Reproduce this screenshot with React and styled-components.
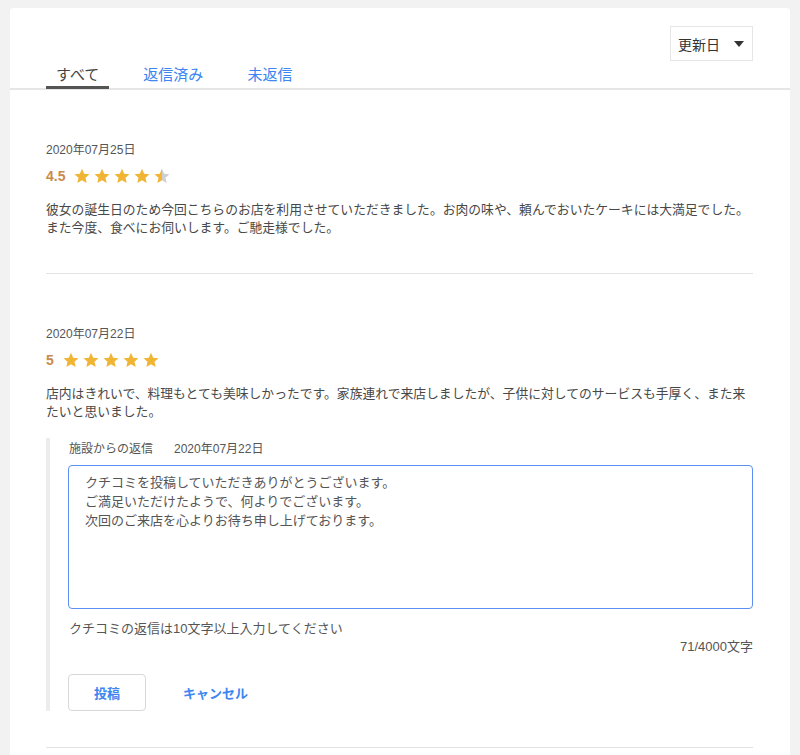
import React from 'react';
import styled, { createGlobalStyle } from 'styled-components';

const GlobalStyle = createGlobalStyle`
  html, body {
    margin: 0;
    padding: 0;
    background: #f2f2f2;
  }
  body {
    font-family: "Liberation Sans", "Noto Sans CJK JP", sans-serif;
    color: #444;
  }
`;

const Page = styled.div`
  padding: 8px 10px 0 10px;
  min-height: 747px;
`;

const Card = styled.div`
  background: #fff;
  border-radius: 3px 3px 0 0;
  min-height: 747px;
`;

const Header = styled.div`
  padding-top: 18px;
  border-bottom: 2px solid #e6e6e6;
`;

const SortRow = styled.div`
  display: flex;
  justify-content: flex-end;
  padding-right: 37px;
`;

const SortSelect = styled.div`
  width: 83px;
  height: 35px;
  box-sizing: border-box;
  border: 1px solid #e6e6e6;
  display: flex;
  align-items: center;
  justify-content: space-between;
  padding: 0 8px 0 7px;
  font-size: 14px;
  color: #333;
`;

const Caret = styled.span`
  width: 0;
  height: 0;
  border-left: 5px solid transparent;
  border-right: 5px solid transparent;
  border-top: 6px solid #333;
`;

const TabList = styled.div`
  display: flex;
  gap: 24px;
  padding-left: 36px;
  margin-top: 4px;
`;

const Tab = styled.div`
  padding: 0 10px 1px 10px;
  font-size: 15px;
  line-height: 20px;
  color: ${p => (p.$active ? '#444' : '#3d85f0')};
  border-bottom: 3px solid ${p => (p.$active ? '#555' : 'transparent')};
  margin-bottom: -1px;
`;

const List = styled.div`
  padding: 0 37px 0 36px;
`;

const Review = styled.div`
  padding: 51px 0 36px;
  border-bottom: 1px solid #e3e3e3;
`;

const DateText = styled.div`
  font-size: 12px;
  line-height: 18px;
  color: #555;
`;

const RatingRow = styled.div`
  display: flex;
  align-items: center;
  margin-top: 8px;
  height: 18px;
`;

const Score = styled.span`
  font-size: 14px;
  font-weight: 700;
  color: #c98a4b;
  margin-right: 9px;
`;

const Stars = styled.div`
  display: flex;
  gap: 4px;
`;

const Body = styled.p`
  margin: 16px 0 0;
  font-size: 12.8px;
  line-height: 18px;
  color: #484848;
`;

const ReplyBlock = styled.div`
  margin-top: 17px;
  border-left: 4px solid #ececec;
  padding: 0 0 0 18px;
`;

const ReplyHead = styled.div`
  display: flex;
  gap: 21px;
  font-size: 12px;
  line-height: 22px;
  color: #555;
  padding-left: 1px;
`;

const ReplyInput = styled.textarea`
  display: block;
  width: 100%;
  height: 144px;
  box-sizing: border-box;
  margin-top: 5px;
  border: 1px solid #5b8ff2;
  border-radius: 4px;
  padding: 7px 16px;
  font-family: "Liberation Sans", "Noto Sans CJK JP", sans-serif;
  font-size: 13px;
  line-height: 19px;
  color: #555;
  resize: none;
  outline: none;
`;

const Hint = styled.div`
  margin-top: 11px;
  font-size: 13px;
  line-height: 18px;
  color: #555;
  padding-left: 1px;
`;

const Counter = styled.div`
  text-align: right;
  font-size: 13px;
  line-height: 18px;
  color: #555;
`;

const Actions = styled.div`
  display: flex;
  align-items: center;
  gap: 37px;
  margin-top: 18px;
`;

const SubmitButton = styled.button`
  width: 78px;
  height: 37px;
  border: 1px solid #d8d8d8;
  border-radius: 4px;
  background: #fff;
  color: #3d85f0;
  font-family: inherit;
  font-size: 13px;
  font-weight: 700;
`;

const CancelButton = styled.button`
  border: none;
  background: none;
  padding: 0;
  color: #3d85f0;
  font-family: inherit;
  font-size: 13px;
  font-weight: 700;
`;

const STAR_PATH = 'M8 0.8l2.2 4.9 5.3 0.5-4 3.6 1.2 5.2L8 12.3 3.3 15l1.2-5.2-4-3.6 5.3-0.5z';

function Star({ fill, id }) {
  return (
    <svg width="16" height="16" viewBox="0 0 16 16">
      <defs>
        <linearGradient id={id}>
          <stop offset={fill} stopColor="#f1b535" />
          <stop offset={fill} stopColor="#cfcfcf" />
        </linearGradient>
      </defs>
      <path d={STAR_PATH} fill={`url(#${id})`} />
    </svg>
  );
}

function Rating({ score, uid }) {
  return (
    <RatingRow>
      <Score>{score}</Score>
      <Stars>
        {[0, 1, 2, 3, 4].map(i => {
          const f = Math.max(0, Math.min(1, score - i));
          return <Star key={i} fill={f} id={`${uid}-${i}`} />;
        })}
      </Stars>
    </RatingRow>
  );
}

export default function App() {
  return (
    <Page>
      <GlobalStyle />
      <Card>
        <Header>
          <SortRow>
            <SortSelect>
              <span>更新日</span>
              <Caret />
            </SortSelect>
          </SortRow>
          <TabList>
            <Tab $active>すべて</Tab>
            <Tab>返信済み</Tab>
            <Tab>未返信</Tab>
          </TabList>
        </Header>
        <List>
          <Review>
            <DateText>2020年07月25日</DateText>
            <Rating score={4.5} uid="r1" />
            <Body>
              彼女の誕生日のため今回こちらのお店を利用させていただきました。お肉の味や、頼んでおいたケーキには大満足でした。また今度、食べにお伺いします。ご馳走様でした。
            </Body>
          </Review>
          <Review>
            <DateText>2020年07月22日</DateText>
            <Rating score={5} uid="r2" />
            <Body>
              店内はきれいで、料理もとても美味しかったです。家族連れで来店しましたが、子供に対してのサービスも手厚く、また来たいと思いました。
            </Body>
            <ReplyBlock>
              <ReplyHead>
                <span>施設からの返信</span>
                <span>2020年07月22日</span>
              </ReplyHead>
              <ReplyInput
                readOnly
                value={'クチコミを投稿していただきありがとうございます。\nご満足いただけたようで、何よりでございます。\n次回のご来店を心よりお待ち申し上げております。'}
              />
              <Hint>クチコミの返信は10文字以上入力してください</Hint>
              <Counter>71/4000文字</Counter>
              <Actions>
                <SubmitButton>投稿</SubmitButton>
                <CancelButton>キャンセル</CancelButton>
              </Actions>
            </ReplyBlock>
          </Review>
        </List>
      </Card>
    </Page>
  );
}
